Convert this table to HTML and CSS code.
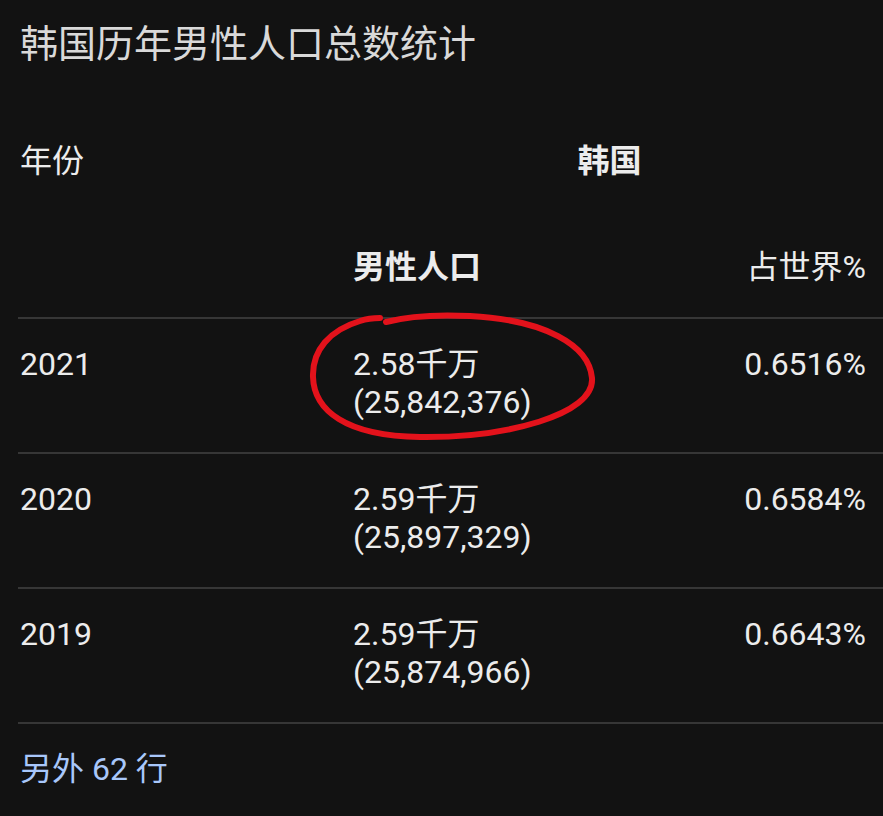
FILE: index.html
```html
<!DOCTYPE html>
<html lang="zh-CN">
<head>
    <meta charset="UTF-8">
    <meta name="viewport" content="width=device-width, initial-scale=1.0">
    <title>韩国历年男性人口总数统计</title>
    <link rel="stylesheet" href="styles.css">
</head>
<body>
    <div class="sheet">
        <h1 class="title">韩国历年男性人口总数统计</h1>

        <table class="stats">
            <thead>
                <tr class="head-top">
                    <th class="col-year">年份</th>
                    <th class="col-country" colspan="2">韩国</th>
                </tr>
                <tr class="head-sub">
                    <th></th>
                    <th class="col-value strong">男性人口</th>
                    <th class="col-share">占世界%</th>
                </tr>
            </thead>
            <tbody>
                <tr>
                    <td class="col-year">2021</td>
                    <td class="col-value">2.58千万<br>(25,842,376)</td>
                    <td class="col-share">0.6516%</td>
                </tr>
                <tr>
                    <td class="col-year">2020</td>
                    <td class="col-value">2.59千万<br>(25,897,329)</td>
                    <td class="col-share">0.6584%</td>
                </tr>
                <tr>
                    <td class="col-year">2019</td>
                    <td class="col-value">2.59千万<br>(25,874,966)</td>
                    <td class="col-share">0.6643%</td>
                </tr>
            </tbody>
        </table>

        <div class="more">另外 62 行</div>

        <!-- 手绘红圈标注 -->
        <svg class="mark" width="883" height="816" viewBox="0 0 883 816">
            <path d="M380 318 C372 318 366 319 360 321 C330 330 312 350 313 377 C314 410 345 436 420 437 C505 438 595 415 592 378 C589 345 545 320 470 316 C430 314 405 317 386 322"
                  fill="none" stroke="#e3121b" stroke-width="6" stroke-linecap="round"/>
        </svg>
    </div>
</body>
</html>
```

FILE: styles.css
```css
* {
    margin: 0;
    padding: 0;
    box-sizing: border-box;
}

body {
    background: #121212;
    color: #ececec;
    font-family: Roboto, 'Noto Sans CJK SC', sans-serif;
    width: 883px;
    height: 816px;
    overflow: hidden;
}

.sheet {
    position: relative;
    height: 816px;
}

.title {
    font-size: 38px;
    font-weight: 400;
    line-height: 50px;
    color: #d9d9d9;
    padding: 19px 0 0 20px;
}

.stats {
    margin-left: 18px;
    width: calc(100% - 18px);
    border-collapse: collapse;
    font-size: 32px;
    line-height: 38px;
}

.stats th,
.stats td {
    text-align: left;
    vertical-align: top;
    font-weight: 400;
}

.head-top th {
    padding-top: 73px;
}

.head-sub th {
    padding-top: 68px;
    padding-bottom: 31px;
}

.stats th.strong,
.stats th.col-country {
    font-weight: 700;
}

.stats .col-year {
    width: 335px;
    padding-left: 2px;
}

.stats th.col-country {
    text-align: center;
    padding-right: 17px;
}

.stats .col-share {
    text-align: right;
    padding-right: 17px;
}

.stats tbody tr {
    border-top: 2px solid #363636;
}

.stats tbody tr:last-child {
    border-bottom: 2px solid #363636;
}

.stats tbody td {
    padding-top: 26px;
    padding-bottom: 31px;
}

.more {
    color: #a8c7fa;
    font-size: 32px;
    line-height: 38px;
    padding: 26px 0 0 20px;
}

.mark {
    position: absolute;
    top: 0;
    left: 0;
    pointer-events: none;
}
```
